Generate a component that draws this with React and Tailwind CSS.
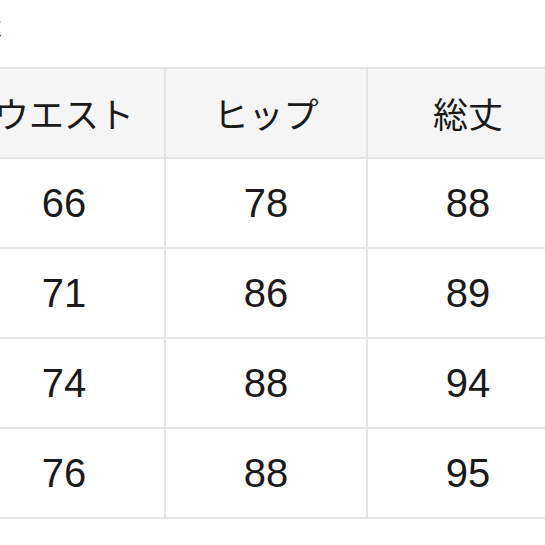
import React from "react";

const header = ["ウエスト", "ヒップ", "総丈"];
const rows = [
  ["66", "78", "88"],
  ["71", "86", "89"],
  ["74", "88", "94"],
  ["76", "88", "95"],
];

export default function App() {
  return (
    <div className="relative w-[545px] h-[545px] overflow-hidden bg-white">
      <span
        className="absolute left-[-28px] top-[6px] text-[30px] leading-none text-[#222]"
        style={{ fontFamily: '"Noto Sans CJK JP", sans-serif' }}
      >
        表
      </span>
      <div className="pt-[67px] ml-[-38px]">
        <div className="grid grid-cols-[200px_200px_200px] gap-[2px] bg-[#e4e4e4] border-2 border-[#e4e4e4] w-max">
          {header.map((h) => (
            <div
              key={h}
              className="h-[88px] bg-[#f5f5f5] flex items-center justify-center text-[35px] text-[#1a1a1a]"
              style={{ fontFamily: '"Noto Sans CJK JP", sans-serif' }}
            >
              {h}
            </div>
          ))}
          {rows.map((r, i) =>
            r.map((v, j) => (
              <div
                key={i + "-" + j}
                className="h-[88px] bg-white flex items-center justify-center text-[40px] text-[#1a1a1a] font-['Liberation_Sans',sans-serif]"
              >
                {v}
              </div>
            ))
          )}
        </div>
      </div>
    </div>
  );
}
